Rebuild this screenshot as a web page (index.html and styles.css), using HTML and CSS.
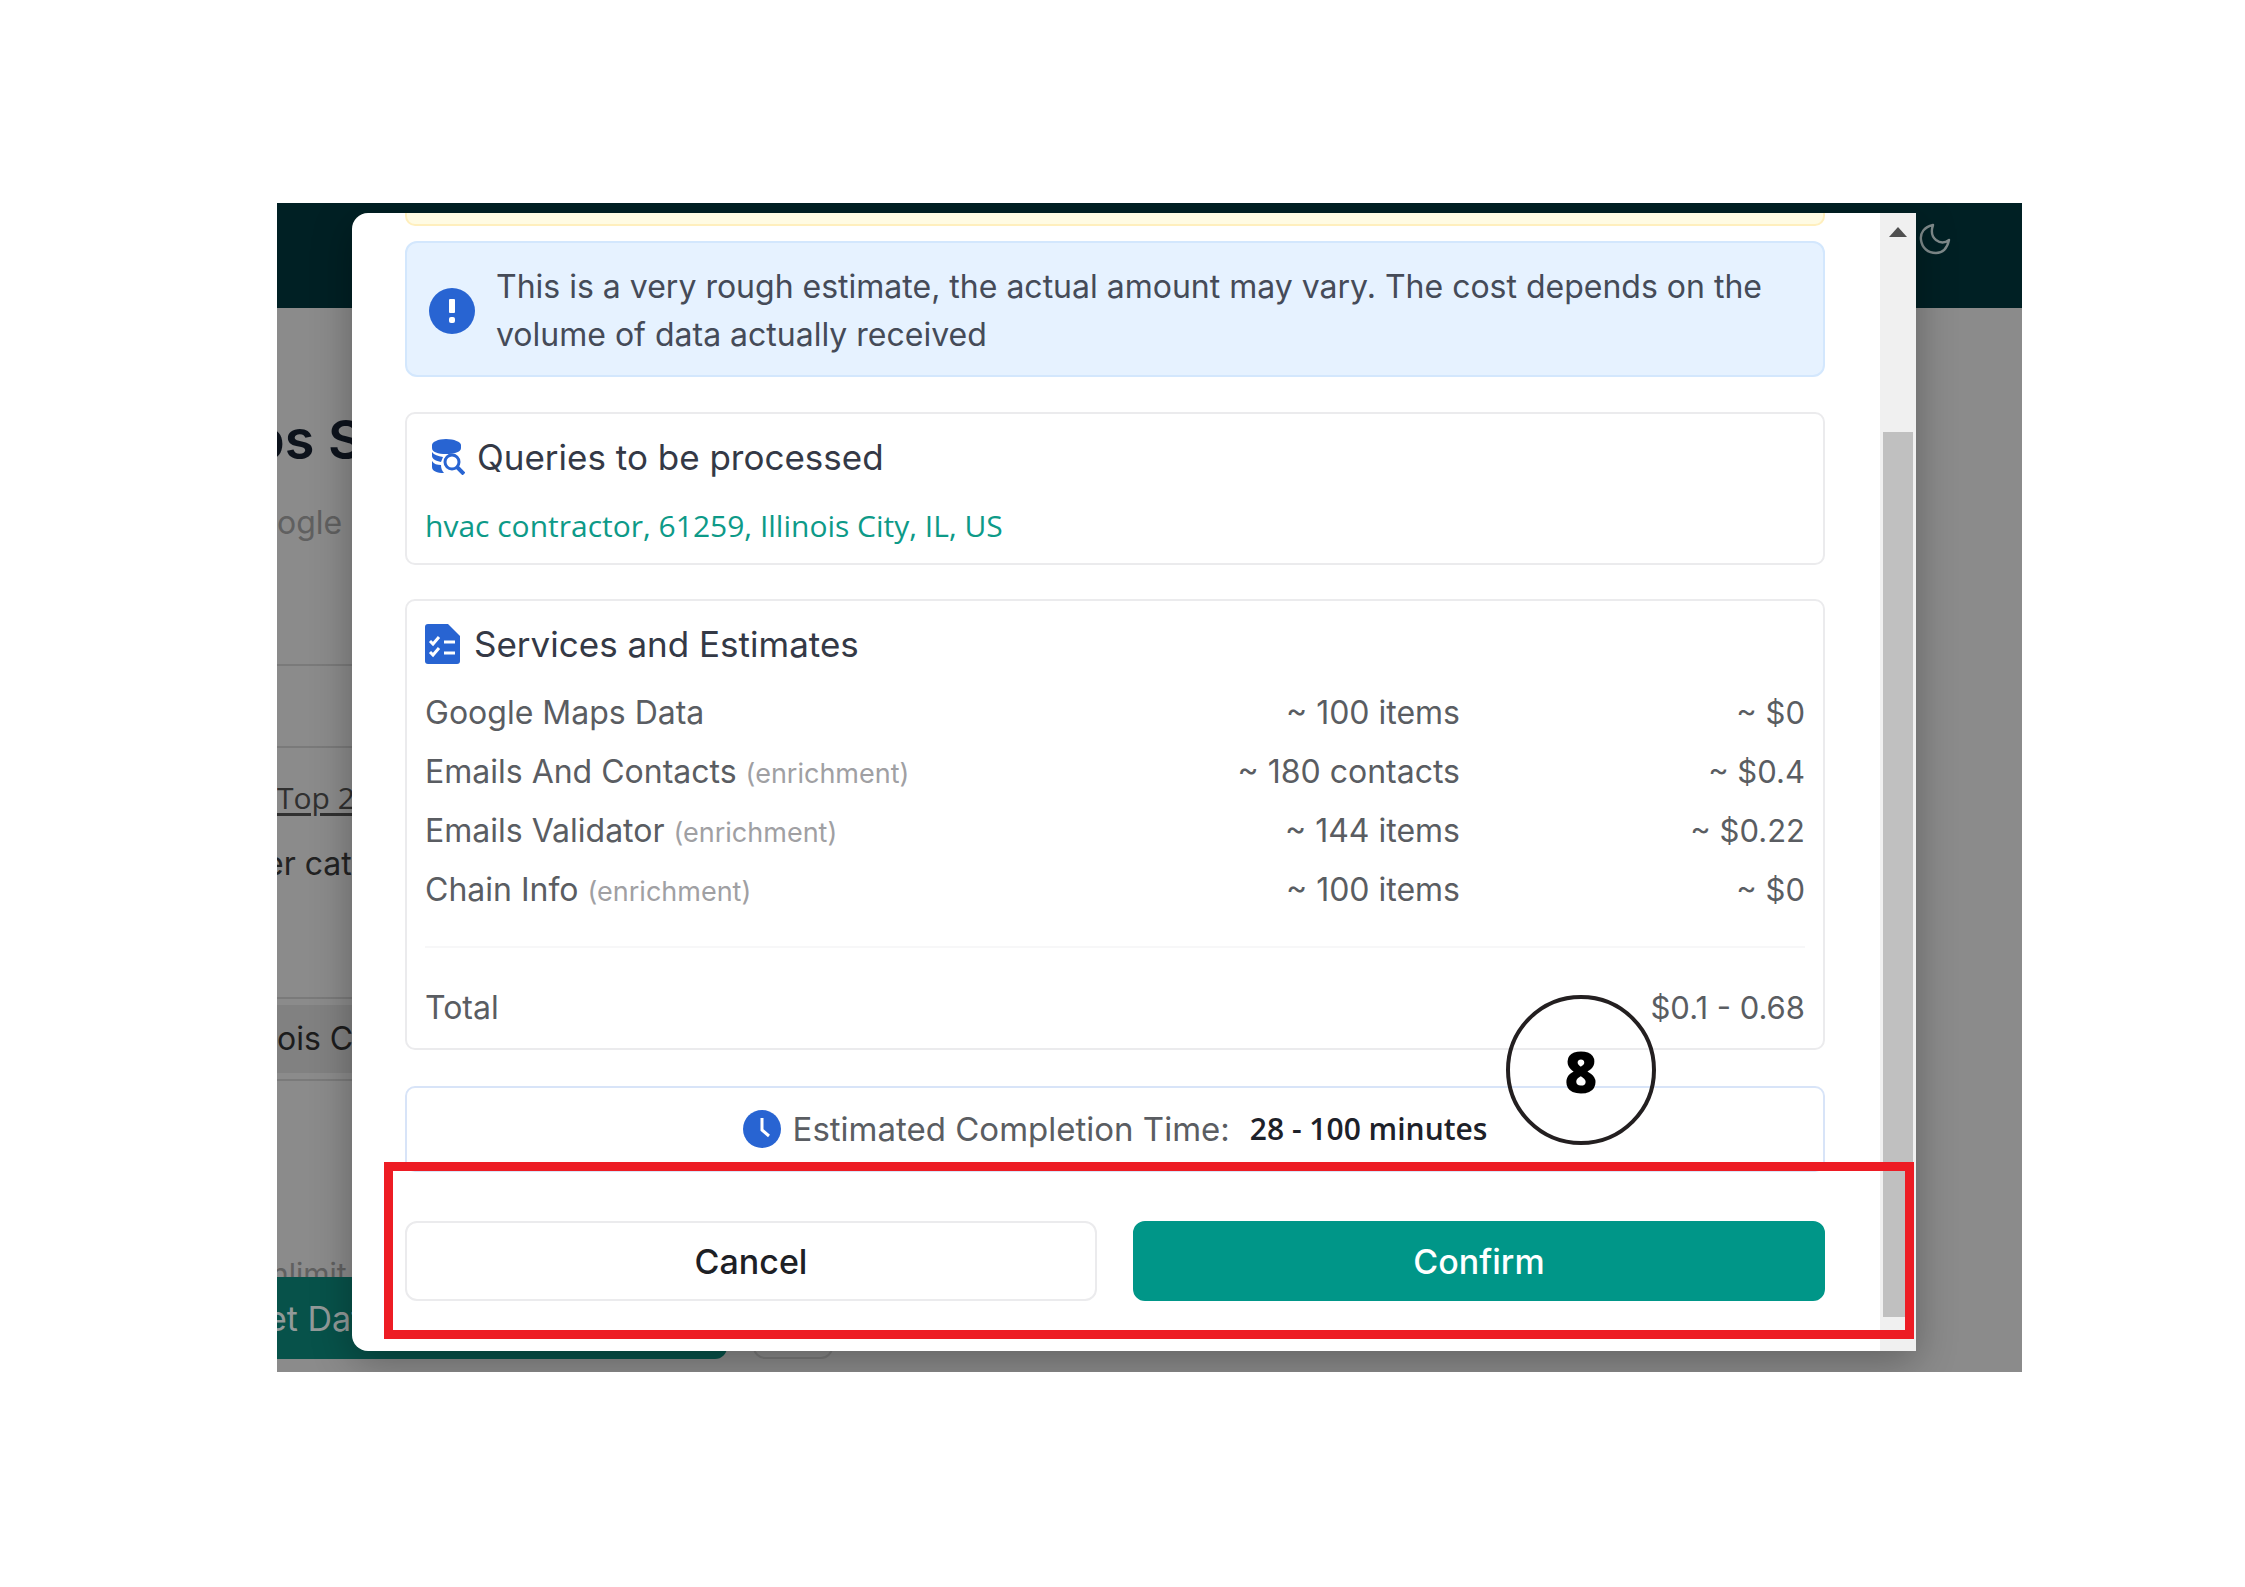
FILE: index.html
```html
<!DOCTYPE html>
<html lang="en">
<head>
<meta charset="utf-8">
<title>Confirm task</title>
<link rel="stylesheet" href="styles.css">
</head>
<body>
<main class="stage">
  <div class="app" aria-hidden="true">
    <header class="app-header">
      <svg class="moon" viewBox="0 0 32 32" fill="none" stroke="#7f8a8b" stroke-width="2.4" stroke-linejoin="round"><path d="M14 2C5 4 1 10 2 17c1 8 7 13 15 13 6 0 11-4 13-13-4 3-9 3-13 0-5-4-5-9-3-15z"/></svg>
    </header>
    <div class="app-body">
      <div class="app-title">ps S</div>
      <div class="app-subtitle">ogle</div>
      <div class="app-panel"></div>
      <div class="app-links"><span class="app-link">Top 2</span></div>
      <div class="app-text">er cat</div>
      <div class="app-select"><div class="app-option">ois C</div></div>
      <div class="app-note">nlimit</div>
      <div class="app-actions"><div class="app-run">et Dat</div><div class="app-more"></div></div>
    </div>
  </div>

  <section class="modal" role="dialog" aria-label="Confirm task">
    <div class="modal-content">
      <div class="warning"></div>
      <div class="info">
        <svg class="icon-info" viewBox="0 0 46 46"><circle cx="23" cy="23" r="23" fill="#2864d2"/><rect x="20" y="11" width="6" height="14" rx="1" fill="#fff"/><rect x="20" y="29" width="6" height="6" rx="2" fill="#fff"/></svg>
        <p class="info-text">This is a very rough estimate, the actual amount may vary. The cost depends on the volume of data actually received</p>
      </div>

      <div class="card queries">
        <h2 class="card-title queries-title">
          <svg class="icon-db" viewBox="0 0 34 36"><g fill="#2864d2"><path d="M1 6C1 3 7 0 15 0s15 3 15 6v3c0 4-7 6-15 6S1 13 1 9z"/><path d="M1 13c2 3 6 4 11 5l-2 5c-5-1-9-3-9-6z"/><path d="M1 22c2 3 5 4 9 4 0 3 1 6 3 8-7 0-12-2-12-6z"/></g><circle cx="21" cy="23" r="7" fill="none" stroke="#2864d2" stroke-width="3"/><path d="M26 28l7 7" stroke="#2864d2" stroke-width="4"/></svg>
          Queries to be processed
        </h2>
        <p class="query">hvac contractor, 61259, Illinois City, IL, US</p>
      </div>

      <div class="card services">
        <h2 class="card-title">
          <svg class="icon-list" viewBox="0 0 35 40"><path d="M3 0h20l12 12v25a3 3 0 0 1-3 3H3a3 3 0 0 1-3-3V3a3 3 0 0 1 3-3z" fill="#2864d2"/><g fill="none" stroke="#fff" stroke-width="3"><path d="M5 17l3 3 6-7M5 28l3 3 6-7M19 18h11M19 29h11"/></g></svg>
          Services and Estimates
        </h2>
        <table class="estimates">
          <tbody>
            <tr><td>Google Maps Data</td><td>~ 100 items</td><td>~ $0</td></tr>
            <tr><td>Emails And Contacts <small>(enrichment)</small></td><td>~ 180 contacts</td><td>~ $0.4</td></tr>
            <tr><td>Emails Validator <small>(enrichment)</small></td><td>~ 144 items</td><td>~ $0.22</td></tr>
            <tr><td>Chain Info <small>(enrichment)</small></td><td>~ 100 items</td><td>~ $0</td></tr>
          </tbody>
          <tfoot>
            <tr><td>Total</td><td></td><td>$0.1 - 0.68</td></tr>
          </tfoot>
        </table>
      </div>

      <div class="card completion">
        <svg class="icon-clock" viewBox="0 0 38 38"><circle cx="19" cy="19" r="19" fill="#2864d2"/><path d="M19 8v12l7 6" fill="none" stroke="#fff" stroke-width="3"/></svg>
        <span>Estimated Completion Time:</span>
        <strong>28 - 100 minutes</strong>
      </div>

      <div class="actions">
        <button type="button" class="button cancel">Cancel</button>
        <button type="button" class="button confirm">Confirm</button>
      </div>
    </div>
    <div class="scrollbar">
      <svg class="scroll-up" viewBox="0 0 18 10"><path d="M0 10L9 0l9 10z" fill="#505050"/></svg>
      <div class="thumb"></div>
    </div>
    <div class="highlight"></div>
    <div class="step">8</div>
  </section>
</main>
</body>
</html>
```
FILE: styles.css
```css
* { box-sizing: border-box; }

body {
  margin: 0;
  background: #fff;
  color: #5a5d62;
  font-family: Inter, "Liberation Sans", sans-serif;
  font-size: 32px;
}

p, h2 { margin: 0; }

.stage {
  display: grid;
  margin: 203px 223px 214px 277px;
  overflow: hidden;
}

.app, .modal { grid-area: 1 / 1; }

/* Page behind the dialog */
.app {
  min-width: 0;
  background: #8b8b8b;
  white-space: nowrap;
}

.app-header {
  display: flex;
  justify-content: flex-end;
  height: 105px;
  padding: 20px 71px 0 0;
  background: #002024;
}

.moon { width: 32px; height: 32px; }

.app-body { width: 60%; }

.app-title {
  margin: 92px 0 20px -26px;
  color: #0d131c;
  font-size: 54px;
  font-weight: 600;
  line-height: 80px;
}

.app-subtitle {
  color: #606060;
  line-height: 46px;
}

.app-panel {
  height: 84px;
  margin-top: 118px;
  border: solid #7a7a7a;
  border-width: 2px 0;
}

.app-links { margin-top: 30px; line-height: 40px; }

.app-link {
  color: #303030;
  font-family: "Open Sans", sans-serif;
  font-size: 30px;
  text-decoration: underline;
  text-underline-offset: 4px;
}

.app-text {
  margin: 26px 0 0 -12px;
  color: #222;
  line-height: 40px;
}

.app-select {
  margin-top: 113px;
  padding: 6px 0;
  border: solid #7a7a7a;
  border-width: 2px 0;
}

.app-option {
  background: #818181;
  color: #1c1c1c;
  line-height: 68px;
}

.app-note {
  height: 21px;
  margin: 175px 0 0 -6px;
  overflow: hidden;
  color: #606060;
  font-size: 30px;
  line-height: 36px;
}

.app-actions { display: flex; gap: 26px; }

.app-run {
  width: 450px;
  height: 82px;
  border-radius: 0 0 12px 0;
  background: #07524a;
  color: #929a99;
  font-size: 34px;
  line-height: 84px;
  text-indent: -10px;
}

.app-more {
  width: 80px;
  border: 2px solid #7a7a7a;
  border-radius: 12px;
}

/* Dialog */
.modal {
  position: relative;
  display: flex;
  margin: 10px 106px 21px 75px;
  border-radius: 16px 0 0 16px;
  background: #fff;
  box-shadow: 0 10px 40px rgba(0, 0, 0, 0.3);
}

.modal-content {
  flex: 1;
  min-width: 0;
  padding: 0 55px 50px 53px;
}

.warning {
  height: 13px;
  border: 2px solid #ffefbd;
  border-top: 0;
  border-radius: 0 0 10px 10px;
  background: #fffbe3;
}

.info {
  display: flex;
  align-items: center;
  gap: 21px;
  margin-top: 15px;
  padding: 20px 22px 16px;
  border: 2px solid #d3e7fd;
  border-radius: 12px;
  background: #e6f2ff;
}

.icon-info { flex: none; width: 46px; height: 46px; }

.info-text {
  color: #454b58;
  line-height: 48px;
}

.card {
  border: 2px solid #ebebed;
  border-radius: 10px;
}

.queries {
  margin-top: 35px;
  padding: 14px 18px 5px;
}

.card-title {
  display: flex;
  align-items: center;
  gap: 14px;
  color: #343946;
  font-size: 35px;
  font-weight: 400;
  line-height: 58px;
}

.queries-title { gap: 12px; padding-left: 6px; }

.icon-db { width: 34px; height: 36px; }
.icon-list { width: 35px; height: 40px; }

.query {
  margin-top: 8px;
  color: #0d9a88;
  font-family: "Open Sans", sans-serif;
  font-size: 30px;
  line-height: 64px;
}

.services {
  margin-top: 34px;
  padding: 14px 18px 7px;
}

.estimates {
  width: 100%;
  margin-top: 10px;
  border-spacing: 0;
  table-layout: fixed;
}

.estimates td {
  padding: 0;
  text-align: right;
  line-height: 59px;
  white-space: nowrap;
}

.estimates td:first-child { width: 50%; text-align: left; }
.estimates td:last-child { font-size: 31px; }
.estimates small { color: #a0a0a3; font-size: 27px; line-height: 1; }

.estimates tbody tr:last-child td { padding-bottom: 27px; }

.estimates tfoot td {
  padding: 30px 0 4px;
  border-top: 2px solid #f7f7f8;
}

.completion {
  display: flex;
  align-items: center;
  justify-content: center;
  gap: 12px;
  margin-top: 36px;
  border-color: #d8e4f8;
  font-size: 33px;
  line-height: 82px;
}

.icon-clock { width: 38px; height: 38px; }

.completion strong {
  margin-left: 8px;
  color: #1d2129;
  font-family: "Open Sans", sans-serif;
  font-size: 30px;
  font-weight: 600;
}

.actions {
  display: grid;
  grid-template-columns: 1fr 1fr;
  gap: 36px;
  margin-top: 49px;
}

.button {
  height: 80px;
  border: 2px solid #ebebed;
  border-radius: 12px;
  background: #fff;
  color: #1d2025;
  font: 500 34px Inter, "Liberation Sans", sans-serif;
}

.confirm {
  border-color: #009688;
  background: #009688;
  color: #fff;
}

.scrollbar {
  display: flex;
  flex-direction: column;
  align-items: center;
  width: 36px;
  padding: 14px 0 34px;
  background: #f0f0f0;
}

.scroll-up { width: 18px; height: 10px; }

.thumb {
  flex: 1;
  width: 30px;
  margin-top: 195px;
  background: #c0c0c0;
}

/* Annotations laid over the dialog */
.highlight {
  position: absolute;
  right: 2px;
  bottom: 12px;
  left: 32px;
  height: 177px;
  border: 9px solid #ed1c24;
}

.step {
  position: absolute;
  right: 260px;
  bottom: 206px;
  width: 150px;
  height: 150px;
  border: 4px solid #231f20;
  border-radius: 50%;
  color: #000;
  font: 800 56px/144px "Open Sans", sans-serif;
  text-align: center;
}
```
